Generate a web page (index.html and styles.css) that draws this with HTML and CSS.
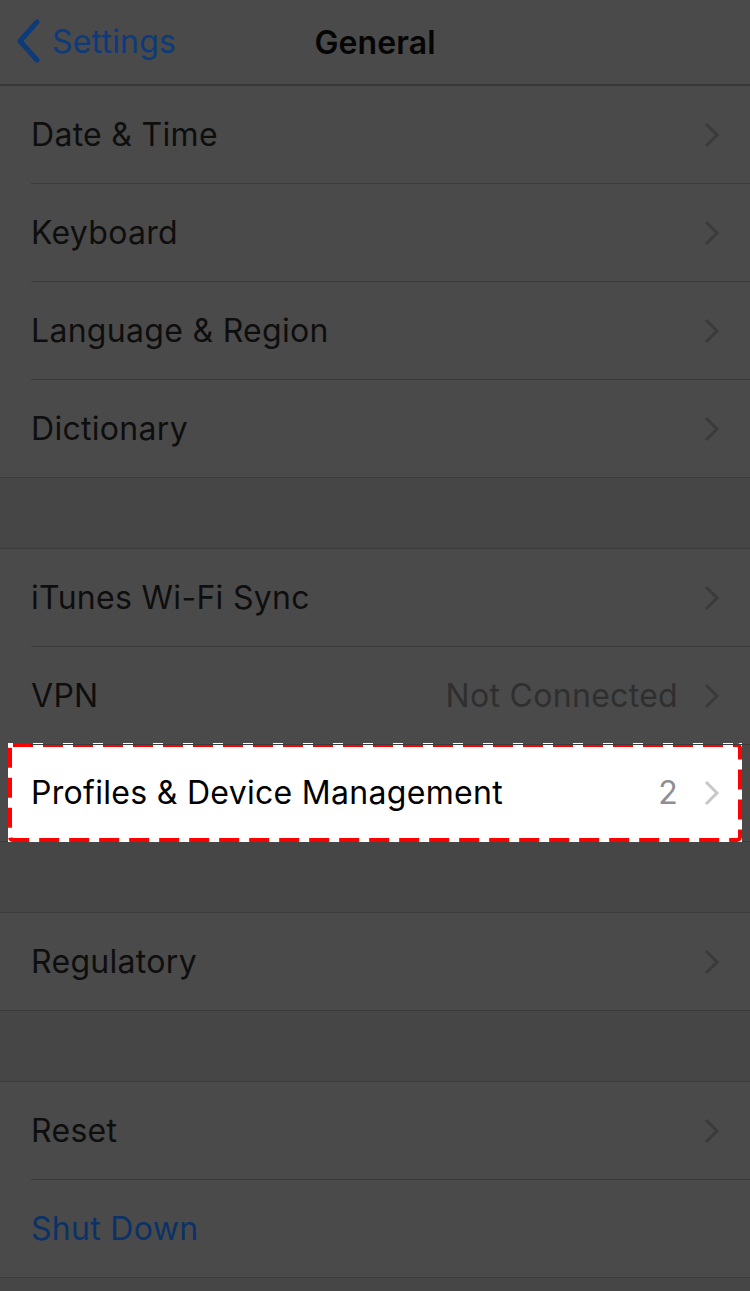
FILE: index.html
```html
<!DOCTYPE html>
<html>
<head>
<meta charset="utf-8">
<link rel="stylesheet" href="styles.css">
</head>
<body>
<div class="screen">
  <header class="nav">
    <div class="back">
      <svg class="back-chev" width="26" height="44" viewBox="0 0 26 44"><path d="M21 3 L4 22 L21 41" fill="none" stroke="#0d3a78" stroke-width="5" stroke-linecap="round" stroke-linejoin="round"/></svg>
      <span class="back-label">Settings</span>
    </div>
    <div class="title">General</div>
  </header>

  <section class="group group-first">
    <div class="row"><span class="label">Date &amp; Time</span><span class="chev"><svg width="16" height="26" viewBox="0 0 16 26"><path d="M2 2 L13 13 L2 24" fill="none" stroke="currentColor" stroke-width="3"/></svg></span></div>
    <div class="row"><span class="label">Keyboard</span><span class="chev"><svg width="16" height="26" viewBox="0 0 16 26"><path d="M2 2 L13 13 L2 24" fill="none" stroke="currentColor" stroke-width="3"/></svg></span></div>
    <div class="row"><span class="label">Language &amp; Region</span><span class="chev"><svg width="16" height="26" viewBox="0 0 16 26"><path d="M2 2 L13 13 L2 24" fill="none" stroke="currentColor" stroke-width="3"/></svg></span></div>
    <div class="row"><span class="label">Dictionary</span><span class="chev"><svg width="16" height="26" viewBox="0 0 16 26"><path d="M2 2 L13 13 L2 24" fill="none" stroke="currentColor" stroke-width="3"/></svg></span></div>
  </section>

  <section class="group">
    <div class="row"><span class="label">iTunes Wi-Fi Sync</span><span class="chev"><svg width="16" height="26" viewBox="0 0 16 26"><path d="M2 2 L13 13 L2 24" fill="none" stroke="currentColor" stroke-width="3"/></svg></span></div>
    <div class="row"><span class="label">VPN</span><span class="value">Not Connected</span><span class="chev"><svg width="16" height="26" viewBox="0 0 16 26"><path d="M2 2 L13 13 L2 24" fill="none" stroke="currentColor" stroke-width="3"/></svg></span></div>
    <div class="row row-highlight">
      <div class="hl-box">
        <span class="label">Profiles &amp; Device Management</span><span class="value">2</span><span class="chev"><svg width="16" height="26" viewBox="0 0 16 26"><path d="M2 2 L13 13 L2 24" fill="none" stroke="currentColor" stroke-width="3"/></svg></span>
        <svg class="dash" width="734" height="99" viewBox="0 0 734 99"><rect x="2" y="2" width="730" height="95" rx="3" fill="none" stroke="#ff0000" stroke-width="4" stroke-dasharray="20 10"/></svg>
      </div>
    </div>
  </section>

  <section class="group">
    <div class="row"><span class="label">Regulatory</span><span class="chev"><svg width="16" height="26" viewBox="0 0 16 26"><path d="M2 2 L13 13 L2 24" fill="none" stroke="currentColor" stroke-width="3"/></svg></span></div>
  </section>

  <section class="group">
    <div class="row"><span class="label">Reset</span><span class="chev"><svg width="16" height="26" viewBox="0 0 16 26"><path d="M2 2 L13 13 L2 24" fill="none" stroke="currentColor" stroke-width="3"/></svg></span></div>
    <div class="row"><span class="label link">Shut Down</span></div>
  </section>
</div>
</body>
</html>
```

FILE: styles.css
```css
html, body {
  margin: 0;
  padding: 0;
}
body {
  background: #464646;
  font-family: "Inter", "Liberation Sans", Arial, sans-serif;
  color: #0e0e0e;
  width: 750px;
  height: 1291px;
  overflow: hidden;
}
.screen {
  display: flex;
  flex-direction: column;
  gap: 70px;
}
.nav {
  height: 84px;
  border-bottom: 2px solid #383838;
  background: #4a4a4a;
  display: flex;
  align-items: center;
  justify-content: center;
  position: relative;
  margin-bottom: -70px;
}
.back {
  position: absolute;
  left: 16px;
  top: 19px;
  display: flex;
  align-items: center;
  gap: 10px;
}
.back-label {
  font-size: 32px;
  color: #0d3a78;
  letter-spacing: 0.2px;
}
.title {
  font-size: 32px;
  font-weight: 600;
  color: #050505;
  letter-spacing: 0.1px;
}
.group {
  background: #4a4a4a;
  border-top: 1px solid #3c3c3c;
  border-bottom: 1px solid #3c3c3c;
}
.group-first {
  border-top: none;
}
.row {
  height: 97px;
  display: flex;
  align-items: center;
  padding: 0 30px 0 31px;
  position: relative;
}
.group .row + .row {
  margin-top: 1px;
}
.group .row + .row::after {
  content: "";
  position: absolute;
  top: -1px;
  left: 31px;
  right: 0;
  height: 1px;
  background: #3c3c3c;
}
.label {
  font-size: 32px;
  flex: 1;
  letter-spacing: 0.3px;
}
.value {
  font-size: 32px;
  letter-spacing: 0.3px;
  color: #2f2f2f;
  margin-right: 26px;
}
.chev {
  color: #3a3a3a;
  display: flex;
  align-items: center;
}
.link {
  color: #0b3266;
}
.row-highlight {
  height: 96px;
  padding: 0;
}
.hl-box {
  position: relative;
  margin-left: 8px;
  width: 734px;
  height: 99px;
  margin-top: -2px;
  margin-bottom: -1px;
  background: #ffffff;
  display: flex;
  align-items: center;
  box-sizing: border-box;
  padding: 0 22px 0 23px;
}
.hl-box .label {
  color: #000;
}
.hl-box .value {
  color: #8e8e93;
}
.hl-box .chev {
  color: #c7c7cc;
}
.dash {
  position: absolute;
  left: 0;
  top: 0;
}
```
